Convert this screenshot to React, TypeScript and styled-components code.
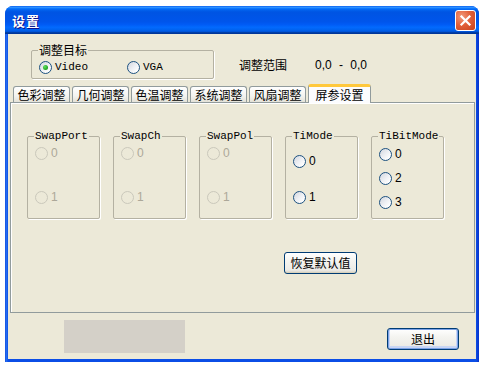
import React from "react";
import styled, { createGlobalStyle } from "styled-components";

const cjk = `"Noto Sans CJK SC", "Noto Sans CJK JP", sans-serif`;
const mono = `"Liberation Mono", "Noto Sans CJK SC", monospace`;
const sans = `"Liberation Sans", Arial, sans-serif`;

const GlobalStyle = createGlobalStyle`
  html, body {
    margin: 0;
    padding: 0;
    background: #fff;
  }
  body {
    font-family: ${cjk};
    font-size: 12px;
    color: #000;
  }
`;

const Window = styled.div`
  margin: 6px 0 0 5px;
  width: 474px;
  height: 356px;
  display: flex;
  flex-direction: column;
  background: linear-gradient(to right, #0a3fd4 0, #2a74f4 1px, #0b4ee6 3px, #0b4ee6 calc(100% - 3px), #0831c9 100%);
  border-radius: 8px 8px 0 0;
  overflow: hidden;
`;

const TitleBar = styled.div`
  height: 28px;
  flex: none;
  display: flex;
  align-items: center;
  justify-content: space-between;
  padding: 0 3px 0 7px;
  background: linear-gradient(
    to bottom,
    #0058ee 0%,
    #3593ff 4%,
    #288eff 6%,
    #127dff 8%,
    #036ffc 10%,
    #0262ee 14%,
    #0057e5 20%,
    #0054e3 24%,
    #0055eb 56%,
    #005bf5 66%,
    #026afe 76%,
    #0062ef 86%,
    #0052d6 92%,
    #0040ab 94%,
    #003092 100%
  );
`;

const TitleText = styled.span`
  font-family: ${cjk};
  font-size: 13px;
  font-weight: 700;
  color: #fff;
  text-shadow: 1px 1px 0 #0f1089;
  letter-spacing: 1px;
`;

const CloseButton = styled.div`
  width: 21px;
  height: 21px;
  box-sizing: border-box;
  border: 1px solid #fff;
  border-radius: 3px;
  background: radial-gradient(circle at 30% 30%, #f29a7b 0%, #e2603a 45%, #c8401a 100%);
  display: flex;
  align-items: center;
  justify-content: center;
  margin-top: 1px;
`;

const Content = styled.div`
  flex: 1;
  margin: 0 3px 3px 3px;
  background: #ece9d8;
  display: flex;
  flex-direction: column;
`;

const TopRow = styled.div`
  height: 50px;
  flex: none;
  box-sizing: border-box;
  display: flex;
  align-items: flex-start;
  padding-left: 23px;
`;

const Group = styled.fieldset<{ $width: number; $height: number }>`
  margin: 0;
  width: ${p => p.$width}px;
  height: ${p => p.$height}px;
  box-sizing: border-box;
  padding: 0 0 0 7px;
  border: 1px solid #b4b1a2;
  border-radius: 2px;
  box-shadow: 1px 1px 0 #fff;
  min-inline-size: 0;
`;

const Legend = styled.legend<{ $mono?: boolean }>`
  padding: 0 1px;
  margin-left: -1px;
  font-family: ${p => (p.$mono ? mono : cjk)};
  font-size: ${p => (p.$mono ? 11 : 12)}px;
  line-height: 14px;
  color: #000;
`;

const TargetGroup = styled(Group)`
  margin-top: 9px;
`;

const InlineOptions = styled.div`
  display: flex;
  align-items: center;
  margin-top: 4px;
`;

const Option = styled.label<{ $minWidth?: number }>`
  display: flex;
  align-items: center;
  height: 13px;
  gap: 3px;
  min-width: ${p => (p.$minWidth ? `${p.$minWidth}px` : "auto")};
`;

const RadioCircle = styled.span<{ $checked?: boolean; $disabled?: boolean }>`
  width: 13px;
  height: 13px;
  box-sizing: border-box;
  flex: none;
  border-radius: 50%;
  border: 1px solid ${p => (p.$disabled ? "#cac8bb" : "#1c5180")};
  background: ${p =>
    p.$disabled ? "#ece9d8" : "linear-gradient(135deg, #d2d6de 0%, #eef0f4 50%, #ffffff 85%)"};
  display: flex;
  align-items: center;
  justify-content: center;

  &::after {
    content: "";
    display: ${p => (p.$checked ? "block" : "none")};
    width: 5px;
    height: 5px;
    border-radius: 50%;
    background: radial-gradient(circle at 35% 35%, #5ee15e 0%, #21a121 70%);
  }
`;

const OptionText = styled.span<{ $mono?: boolean; $disabled?: boolean }>`
  font-family: ${p => (p.$mono ? mono : sans)};
  font-size: ${p => (p.$mono ? 11 : 12)}px;
  line-height: 13px;
  color: ${p => (p.$disabled ? "#aca899" : "#000")};
`;

const RangeLabel = styled.span`
  margin: 24px 0 0 25px;
  font-family: ${cjk};
  font-size: 12px;
  line-height: 14px;
`;

const RangeValue = styled.span`
  margin: 24px 0 0 28px;
  font-family: ${sans};
  font-size: 12px;
  line-height: 14px;
  word-spacing: 4px;
`;

const TabsRow = styled.div`
  height: 18px;
  flex: none;
  display: flex;
  align-items: flex-end;
  gap: 2px;
  padding-left: 5px;
`;

const Tab = styled.div<{ $active?: boolean }>`
  position: relative;
  z-index: ${p => (p.$active ? 1 : 0)};
  box-sizing: border-box;
  width: ${p => (p.$active ? 63 : 57)}px;
  height: ${p => (p.$active ? 19 : 16)}px;
  margin-bottom: ${p => (p.$active ? -1 : 0)}px;
  border: 1px solid #919b9c;
  border-bottom: none;
  border-top: ${p => (p.$active ? "3px solid #ffc83c" : "1px solid #919b9c")};
  border-radius: 3px 3px 0 0;
  background: ${p =>
    p.$active ? "#fcfcfe" : "linear-gradient(to bottom, #ffffff 0%, #f3f3ef 60%, #e4e2d8 100%)"};
  font-family: ${cjk};
  font-size: 12px;
  line-height: 15px;
  text-align: center;
  white-space: nowrap;
`;

const Panel = styled.div`
  height: 211px;
  flex: none;
  box-sizing: border-box;
  margin: 0 1px 0 2px;
  border: 1px solid #919b9c;
  box-shadow: inset 1px 1px 0 #fff;
  background: #ece9d8;
  padding: 26px 0 0 16px;
`;

const GroupGrid = styled.div`
  display: grid;
  grid-template-columns: repeat(5, 73px);
  column-gap: 13px;
  align-items: start;
`;

const OptionStack = styled.div<{ $top: number; $gap: number }>`
  display: flex;
  flex-direction: column;
  padding-top: ${p => p.$top}px;
  gap: ${p => p.$gap}px;
`;

const PushButton = styled.button<{ $default?: boolean }>`
  box-sizing: border-box;
  width: ${p => (p.$default ? 72 : 73)}px;
  height: 22px;
  padding: 0;
  border: 1px solid #003c74;
  border-radius: 3px;
  background: linear-gradient(to bottom, #ffffff 0%, #f4f4f0 40%, #ecebe6 85%, #d6d0c5 100%);
  box-shadow: ${p =>
    p.$default ? "inset 0 0 0 1px #7ba2e7, inset 0 -1px 0 2px #c8d5f4" : "inset 0 -1px 0 #d8d2bd"};
  font-family: ${cjk};
  font-size: 12px;
  line-height: 20px;
  color: #000;
`;

const ResetButton = styled(PushButton)`
  grid-column: 4;
  margin-top: 33px;
  margin-left: -1px;
`;

const Footer = styled.div`
  flex: 1;
  display: flex;
  align-items: flex-start;
  padding: 7px 17px 0 56px;
`;

const StatusBlock = styled.div`
  width: 121px;
  height: 33px;
  background: #d4d0c8;
`;

const ExitButton = styled(PushButton)`
  margin: 8px 0 0 auto;
`;

type Choice = { label: string; checked?: boolean };

interface PanelGroupDef {
  title: string;
  disabled?: boolean;
  top: number;
  gap: number;
  options: Choice[];
}

const groups: PanelGroupDef[] = [
  { title: "SwapPort", disabled: true, top: 4, gap: 31, options: [{ label: "0" }, { label: "1" }] },
  { title: "SwapCh", disabled: true, top: 4, gap: 31, options: [{ label: "0" }, { label: "1" }] },
  { title: "SwapPol", disabled: true, top: 4, gap: 31, options: [{ label: "0" }, { label: "1" }] },
  { title: "TiMode", top: 12, gap: 23, options: [{ label: "0" }, { label: "1" }] },
  { title: "TiBitMode", top: 5, gap: 11, options: [{ label: "0" }, { label: "2" }, { label: "3" }] },
];

const tabs = ["色彩调整", "几何调整", "色温调整", "系统调整", "风扇调整", "屏参设置"];

const Radio: React.FC<{ label: string; checked?: boolean; disabled?: boolean; mono?: boolean; minWidth?: number }> = ({
  label,
  checked,
  disabled,
  mono,
  minWidth,
}) => (
  <Option $minWidth={minWidth}>
    <RadioCircle $checked={checked} $disabled={disabled} />
    <OptionText $mono={mono} $disabled={disabled}>
      {label}
    </OptionText>
  </Option>
);

export default function App() {
  return (
    <>
      <GlobalStyle />
      <Window>
        <TitleBar>
          <TitleText>设置</TitleText>
          <CloseButton>
            <svg width="13" height="13" viewBox="0 0 13 13">
              <path d="M2.5 2.5 L10.5 10.5 M10.5 2.5 L2.5 10.5" stroke="#fff" strokeWidth="2.2" strokeLinecap="square" />
            </svg>
          </CloseButton>
        </TitleBar>
        <Content>
          <TopRow>
            <TargetGroup $width={183} $height={36}>
              <Legend>调整目标</Legend>
              <InlineOptions>
                <Radio label="Video" checked mono minWidth={88} />
                <Radio label="VGA" mono />
              </InlineOptions>
            </TargetGroup>
            <RangeLabel>调整范围</RangeLabel>
            <RangeValue>0,0 - 0,0</RangeValue>
          </TopRow>
          <TabsRow>
            {tabs.map((t, i) => (
              <Tab key={t} $active={i === tabs.length - 1}>
                {t}
              </Tab>
            ))}
          </TabsRow>
          <Panel>
            <GroupGrid>
              {groups.map(g => (
                <Group key={g.title} $width={73} $height={90}>
                  <Legend $mono>{g.title}</Legend>
                  <OptionStack $top={g.top} $gap={g.gap}>
                    {g.options.map(o => (
                      <Radio key={o.label} label={o.label} checked={o.checked} disabled={g.disabled} />
                    ))}
                  </OptionStack>
                </Group>
              ))}
              <ResetButton>恢复默认值</ResetButton>
            </GroupGrid>
          </Panel>
          <Footer>
            <StatusBlock />
            <ExitButton $default>退出</ExitButton>
          </Footer>
        </Content>
      </Window>
    </>
  );
}
